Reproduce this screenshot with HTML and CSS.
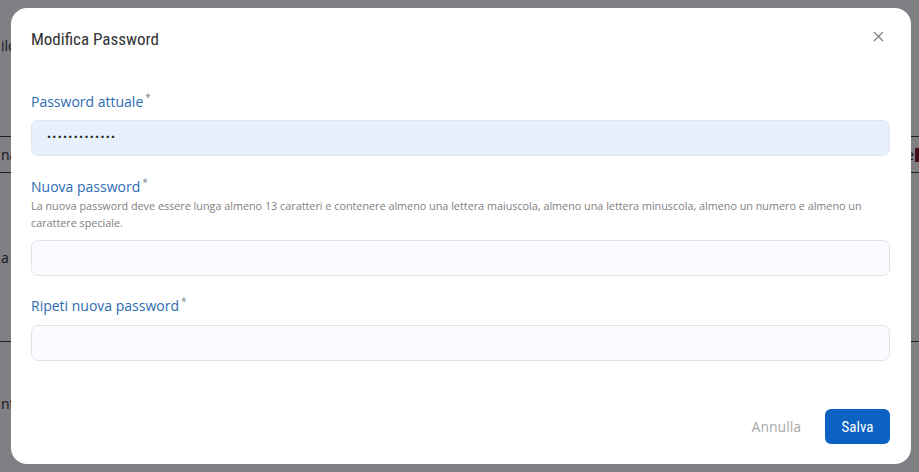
FILE: index.html
```html
<!DOCTYPE html>
<html lang="it">
<head>
<meta charset="utf-8">
<title>Modifica Password</title>
<link rel="stylesheet" href="styles.css">
</head>
<body>
<div class="page">
  <div class="page-row r1"><span class="bg-text">ilo</span></div>
  <div class="page-row r2"><span class="bg-text">na</span><span class="bg-end">e<span class="bg-tag"></span></span></div>
  <div class="page-row r3"><span class="bg-text">a</span></div>
  <div class="page-row r4"><span class="bg-text">nt</span></div>
</div>
<div class="overlay">
  <div class="modal">
    <div class="modal-header">
      <h1 class="modal-title">Modifica Password</h1>
      <button class="close" aria-label="Chiudi">
        <svg width="11" height="11" viewBox="0 0 11 11"><path d="M1 1L10 10M10 1L1 10" stroke="#7a7a7a" stroke-width="1.1" fill="none"/></svg>
      </button>
    </div>
    <div class="modal-body">
      <div class="field f1">
        <label class="label">Password attuale<sup>*</sup></label>
        <div class="input filled"><span class="dots">·············</span></div>
      </div>
      <div class="field f2">
        <label class="label">Nuova password<sup>*</sup></label>
        <p class="hint">La nuova password deve essere lunga almeno 13 caratteri e contenere almeno una lettera maiuscola, almeno una lettera minuscola, almeno un numero e almeno un carattere speciale.</p>
        <div class="input"></div>
      </div>
      <div class="field f3">
        <label class="label">Ripeti nuova password<sup>*</sup></label>
        <div class="input"></div>
      </div>
    </div>
    <div class="modal-footer">
      <button class="btn-link">Annulla</button>
      <button class="btn-primary">Salva</button>
    </div>
  </div>
</div>
</body>
</html>
```
FILE: styles.css
```css
html, body {
  margin: 0;
  padding: 0;
  height: 100%;
}
body {
  font-family: "Open Sans", "Noto Sans", sans-serif;
  background: #ffffff;
  overflow: hidden;
}
.page {
  display: flex;
  flex-direction: column;
}
.page-row {
  border-bottom: 1px solid #333;
  display: flex;
  justify-content: space-between;
  align-items: center;
  padding: 0 0 0 1px;
  color: #222;
  font-size: 14px;
}
.r1 { height: 137px; align-items: flex-start; padding-top: 36px; box-sizing: border-box; }
.r2 { height: 35px; }
.r3 { height: 168px; }
.r4 { height: 122px; border-bottom: none; }
.bg-end {
  display: flex;
  align-items: center;
  gap: 1px;
}
.bg-tag {
  display: inline-block;
  width: 4px;
  height: 14px;
  background: #7a1020;
}
.overlay {
  position: fixed;
  inset: 0;
  background: rgba(14, 14, 22, 0.53);
  padding: 8px 8px 8px 11px;
  box-sizing: border-box;
}
.modal {
  width: 900px;
  height: 456px;
  background: #fff;
  border-radius: 16px;
  box-sizing: border-box;
  padding: 0 21px 20px 20px;
  display: flex;
  flex-direction: column;
}
.modal-header {
  display: flex;
  justify-content: space-between;
  align-items: flex-start;
  padding-top: 19px;
}
.modal-title {
  margin: 0;
  font-family: "Liberation Sans Narrow", "Roboto Condensed", "Roboto", sans-serif;
  font-weight: 400;
  font-size: 17px;
  line-height: 24px;
  color: #333;
}
.close {
  border: none;
  background: none;
  padding: 0;
  margin: 2px 5px 0 0;
  width: 14px;
  height: 14px;
  display: flex;
  align-items: center;
  justify-content: center;
}
.modal-body {
  flex: 1;
  padding-top: 41px;
}
.f2 { margin-top: 21px; }
.f3 { margin-top: 20px; }
.label {
  display: block;
  font-size: 14px;
  line-height: 20px;
  color: #2c6cb3;
  margin-bottom: 8px;
}
.label sup {
  color: #7c8594;
  font-size: 10px;
  line-height: 0;
  margin-left: 2px;
  vertical-align: 6px;
}
.f2 .label { margin-bottom: 0; }
.f3 .label { margin-bottom: 9px; }
.hint {
  margin: 0 0 9px;
  font-size: 10.8px;
  line-height: 17px;
  color: #808080;
}
.input {
  height: 36px;
  box-sizing: border-box;
  border: 1px solid #e1e4ea;
  border-radius: 7px;
  background: #fafbfe;
  display: flex;
  align-items: center;
  padding-left: 15px;
}
.input.filled {
  background: #e8f0fd;
  border-color: #dfe6f2;
}
.dots {
  font-size: 14px;
  font-weight: 700;
  letter-spacing: 1.35px;
  color: #222;
  margin-top: -3px;
}
.modal-footer {
  display: flex;
  justify-content: flex-end;
  align-items: center;
  gap: 24px;
}
.btn-link {
  border: none;
  background: none;
  font-family: "Open Sans", sans-serif;
  font-size: 14px;
  color: #a9a9a9;
  padding: 0;
}
.btn-primary {
  border: none;
  background: #0b62c2;
  color: #fff;
  font-family: "Liberation Sans Narrow", "Roboto Condensed", "Roboto", sans-serif;
  font-weight: 400;
  font-size: 15px;
  width: 65px;
  height: 35px;
  border-radius: 6px;
  padding: 0;
}
```
